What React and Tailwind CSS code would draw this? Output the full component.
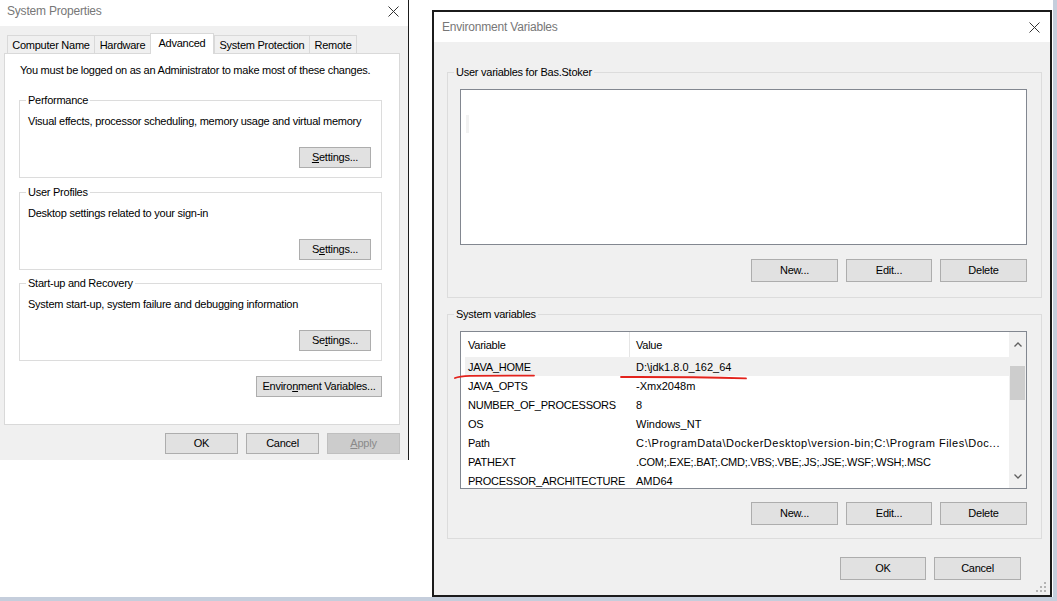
import React from "react";

const FONT = "font-['Liberation_Sans',Arial,sans-serif]";
const TXT = "text-[11px] tracking-[-0.25px] leading-[14px] text-black";

const sysVars = [
  ["JAVA_HOME", "D:\\jdk1.8.0_162_64"],
  ["JAVA_OPTS", "-Xmx2048m"],
  ["NUMBER_OF_PROCESSORS", "8"],
  ["OS", "Windows_NT"],
  ["Path", "C:\\ProgramData\\DockerDesktop\\version-bin;C:\\Program Files\\Doc..."],
  ["PATHEXT", ".COM;.EXE;.BAT;.CMD;.VBS;.VBE;.JS;.JSE;.WSF;.WSH;.MSC"],
  ["PROCESSOR_ARCHITECTURE", "AMD64"],
];

const valueTracking = {
  Path: "tracking-[0.5px]",
  PATHEXT: "tracking-[-0.25px]",
};

const Button = ({ className = "", disabled = false, children }) => (
  <button
    type="button"
    className={`flex items-center justify-center border text-[11px] tracking-[-0.25px] leading-none ${
      disabled
        ? "bg-[#cccccc] border-[#bfbfbf] text-[#8a8a8a]"
        : "bg-[#e1e1e1] border-[#adadad] text-black"
    } ${className}`}
  >
    {children}
  </button>
);

const CloseX = () => (
  <svg width="11" height="11" viewBox="0 0 11 11">
    <path d="M0.5 0.5L10.5 10.5M10.5 0.5L0.5 10.5" stroke="#333" strokeWidth="1" />
  </svg>
);

const Chevron = ({ down }) => (
  <svg width="8" height="5" viewBox="0 0 8 5">
    <path
      d={down ? "M0.5 0.5L4 4L7.5 0.5" : "M0.5 4.5L4 1L7.5 4.5"}
      stroke="#606060"
      strokeWidth="1.3"
      fill="none"
    />
  </svg>
);

const Group = ({ label, bg, className = "", children }) => (
  <fieldset className={`border border-[#dcdcdc] pl-[6px] ${className}`}>
    <legend className={`px-[2px] ${TXT} ${bg}`}>{label}</legend>
    {children}
  </fieldset>
);

const SettingsGroup = ({ label, text, accel, className }) => (
  <Group label={label} bg="bg-white" className={`w-[363px] pr-[10px] pb-[9px] ${className}`}>
    <div className={`pl-[2px] mt-[7px] ${TXT}`}>{text}</div>
    <div className="flex justify-end mt-[19px]">
      <Button className="w-[72px] h-[21px]">{accel}</Button>
    </div>
  </Group>
);

const SystemProperties = () => {
  const tabs = [
    { name: "Computer Name", w: "w-[87px]" },
    { name: "Hardware", w: "w-[56px]" },
    { name: "Advanced", w: "w-[64px]", active: true },
    { name: "System Protection", w: "w-[95px]" },
    { name: "Remote", w: "w-[48px]", last: true },
  ];

  return (
    <div className="absolute left-0 top-0 w-[409px] h-[460px] flex flex-col bg-[#f0f0f0] border-r border-[#1b1b1b]">
      <div className="h-[26px] bg-white flex justify-between pl-[7px] pr-[9px]">
        <span className="pt-[4px] text-[12px] tracking-[-0.2px] leading-[14px] text-[#777]">
          System Properties
        </span>
        <div className="pt-[6px]">
          <CloseX />
        </div>
      </div>

      <div className="px-[4px] pt-[7px]">
        <div className="flex items-end h-[20px] pl-[3px]">
          {tabs.map((t) =>
            t.active ? (
              <div
                key={t.name}
                className={`${t.w} h-[21px] -mb-px relative z-10 bg-white border border-b-0 border-[#d9d9d9] flex items-center justify-center pb-[3px] ${TXT}`}
              >
                {t.name}
              </div>
            ) : (
              <div
                key={t.name}
                className={`${t.w} h-[18px] border-t border-l border-[#d9d9d9] ${
                  t.last ? "border-r" : ""
                } flex items-center justify-center ${TXT}`}
              >
                {t.name}
              </div>
            )
          )}
        </div>

        <div className="w-[396px] h-[372px] bg-white border border-[#d9d9d9] px-[14px] pt-[9px]">
          <div className={`pl-[1px] ${TXT}`}>
            You must be logged on as an Administrator to make most of these changes.
          </div>

          <SettingsGroup
            className="mt-[16px]"
            label="Performance"
            text="Visual effects, processor scheduling, memory usage and virtual memory"
            accel={
              <span>
                <u>S</u>ettings...
              </span>
            }
          />
          <SettingsGroup
            className="mt-[7px]"
            label="User Profiles"
            text="Desktop settings related to your sign-in"
            accel={
              <span>
                S<u>e</u>ttings...
              </span>
            }
          />
          <SettingsGroup
            className="mt-[6px]"
            label="Start-up and Recovery"
            text="System start-up, system failure and debugging information"
            accel={
              <span>
                Se<u>t</u>tings...
              </span>
            }
          />

          <div className="w-[363px] flex justify-end mt-[15px]">
            <Button className="w-[126px] h-[21px]">
              <span>
                Enviro<u>n</u>ment Variables...
              </span>
            </Button>
          </div>
        </div>

        <div className="w-[396px] flex justify-end gap-[8px] mt-[8px]">
          <Button className="w-[73px] h-[21px]">OK</Button>
          <Button className="w-[73px] h-[21px]">Cancel</Button>
          <Button className="w-[73px] h-[21px]" disabled>
            <span>
              <u>A</u>pply
            </span>
          </Button>
        </div>
      </div>
    </div>
  );
};

const EnvButtons = ({ className = "" }) => (
  <div className={`flex justify-end gap-[8px] ${className}`}>
    <Button className="w-[87px] h-[23px]">New...</Button>
    <Button className="w-[86px] h-[23px]">Edit...</Button>
    <Button className="w-[87px] h-[23px]">Delete</Button>
  </div>
);

const SystemList = () => (
  <div className="ml-[6px] mt-[10px] w-[567px] h-[158px] bg-white border border-[#828790] flex overflow-hidden">
    <div className="flex-1 pl-[4px] overflow-hidden">
      <div className={`flex h-[25px] items-center ${TXT}`}>
        <div className="w-[165px] h-full flex items-center pl-[3px] border-r border-[#e5e5e5]">
          Variable
        </div>
        <div className="pl-[6px]">Value</div>
      </div>
      {sysVars.map(([name, value], i) => (
        <div
          key={name}
          className={`flex h-[19px] items-center ${TXT} ${i === 0 ? "bg-[#f0f0f0]" : ""}`}
        >
          <div className="w-[165px] pl-[3px] whitespace-nowrap">{name}</div>
          <div
            className={`flex-1 pl-[6px] pr-[4px] whitespace-nowrap overflow-hidden ${
              valueTracking[name] || "tracking-[0px]"
            }`}
          >
            {value}
          </div>
        </div>
      ))}
    </div>
    <div className="w-[17px] bg-[#f0f0f0] flex flex-col items-center">
      <div className="h-[18px] flex items-end pb-[3px]">
        <Chevron />
      </div>
      <div className="mt-[16px] w-[15px] h-[34px] bg-[#cdcdcd]" />
      <div className="mt-auto h-[16px] flex items-start pt-[2px]">
        <Chevron down />
      </div>
    </div>
  </div>
);

const EnvironmentVariables = () => (
  <div className="absolute left-[432px] top-[10px] w-[620px] h-[587px] border-2 border-[#1b1b1b] flex flex-col bg-[#f0f0f0]">
    <div className="h-[30px] bg-white flex items-center justify-between pl-[8px] pr-[10px]">
      <span className="text-[12px] tracking-[-0.2px] leading-[14px] text-[#777]">
        Environment Variables
      </span>
      <CloseX />
    </div>

    <div className="flex-1 relative">
      <Group
        label="User variables for Bas.Stoker"
        bg="bg-[#f0f0f0]"
        className="ml-[13px] mt-[23px] w-[594px] pr-[14px] pb-[15px]"
      >
        <div className="ml-[6px] mt-[10px] w-[567px] h-[156px] bg-white border border-[#828790] pl-[5px] pt-[25px]">
          <div className="w-[3px] h-[18px] bg-[#f2f2f2]" />
        </div>
        <EnvButtons className="mt-[14px]" />
      </Group>

      <Group
        label="System variables"
        bg="bg-[#f0f0f0]"
        className="ml-[13px] mt-[9px] w-[594px] pr-[14px] pb-[13px]"
      >
        <SystemList />
        <EnvButtons className="mt-[13px]" />
      </Group>

      <div className="flex justify-end gap-[8px] mt-[18px] pr-[29px]">
        <Button className="w-[86px] h-[23px]">OK</Button>
        <Button className="w-[87px] h-[23px]">Cancel</Button>
      </div>

      <svg className="absolute right-[3px] bottom-[2px]" width="11" height="11" viewBox="0 0 11 11">
        <rect x="8" y="0" width="2" height="2" fill="#b4b4b4" />
        <rect x="8" y="4" width="2" height="2" fill="#b4b4b4" />
        <rect x="4" y="4" width="2" height="2" fill="#b4b4b4" />
        <rect x="8" y="8" width="2" height="2" fill="#b4b4b4" />
        <rect x="4" y="8" width="2" height="2" fill="#b4b4b4" />
        <rect x="0" y="8" width="2" height="2" fill="#b4b4b4" />
      </svg>
    </div>
  </div>
);

export default function App() {
  return (
    <div className={`relative w-[1057px] h-[601px] bg-white overflow-hidden ${FONT}`}>
      <SystemProperties />
      <EnvironmentVariables />

      {/* desktop edges */}
      <div className="absolute right-0 top-0 w-[4px] h-[601px] bg-[#c5cedc]" />
      <div className="absolute left-0 bottom-0 w-[1057px] h-[4px] bg-[#c5cedc]" />

      {/* red annotation strokes */}
      <svg className="absolute left-0 top-0 pointer-events-none" width="1057" height="601">
        <path
          d="M455 378 C458 376.6 462 376 470 375.8 L534 375.6"
          stroke="#e3231c"
          strokeWidth="1.8"
          strokeLinecap="round"
          fill="none"
        />
        <path
          d="M621 377 Q690 376.8 746 378.4"
          stroke="#e3231c"
          strokeWidth="1.8"
          strokeLinecap="round"
          fill="none"
        />
      </svg>
    </div>
  );
}
